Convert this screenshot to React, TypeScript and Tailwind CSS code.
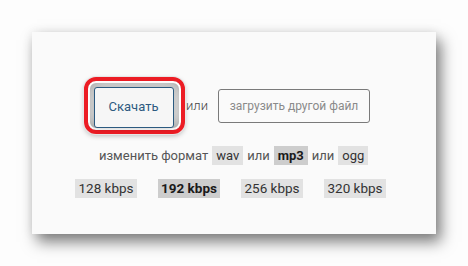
import React from "react";

const Tag = ({ children, active }: { children: React.ReactNode; active?: boolean }) => (
  <span
    className={
      "inline-flex h-[19px] items-center justify-center px-[4px] text-[13px] " +
      (active ? "bg-[#cdcdcd] font-bold text-[#1a1a1a]" : "bg-[#e2e2e2] text-[#333]")
    }
  >
    {children}
  </span>
);

const Kbps = ({ children, active }: { children: React.ReactNode; active?: boolean }) => (
  <span
    className={
      "inline-flex h-[19px] w-[62px] items-center justify-center text-[13.5px] " +
      (active ? "bg-[#cdcdcd] font-bold text-[#1a1a1a]" : "bg-[#e2e2e2] text-[#333]")
    }
  >
    {children}
  </span>
);

export default function App() {
  return (
    <div
      className="h-[266px] w-[468px] overflow-hidden bg-[#fdfdfd] pl-[32px] pt-[32px]"
      style={{ fontFamily: "Roboto, 'Liberation Sans', sans-serif" }}
    >
      <div className="flex h-[202px] w-[404px] flex-col bg-[#fafafa] shadow-[5px_8px_14px_rgba(0,0,0,0.5),0_0_10px_rgba(0,0,0,0.08)]">
        <div className="mt-[45px] flex items-center pl-[52px]">
          <div className="flex h-[57px] w-[101px] items-center justify-center rounded-[12px] border-[4px] border-[#ec1c24] pt-[3px] pr-[2px] shadow-[0_0_0_1px_#e6e6e6,0_2px_5px_rgba(0,0,0,0.25),inset_0_0_0_2px_#ffffff,inset_0_0_14px_rgba(0,0,0,0.5)]">
            <div className="flex h-[41px] w-[80px] items-center justify-center rounded-[3px] border border-[#2b5a80] bg-[#f6f6f6] text-[13px] text-[#2d5a80] shadow-[0_0_6px_rgba(0,0,0,0.25)]">
              Скачать
            </div>
          </div>
          <span className="ml-[1px] text-[13px] font-light text-[#444]">или</span>
          <div className="ml-[10px] flex h-[34px] w-[152px] items-center justify-center rounded-[3px] border border-[#7a7a7a] text-[12px] text-[#8a8a8a]">
            загрузить другой файл
          </div>
        </div>
        <div className="mt-[12px] flex items-center gap-[4px] pl-[67px] text-[13px] text-[#555]">
          <span>изменить формат</span>
          <Tag>wav</Tag>
          <span>или</span>
          <Tag active>mp3</Tag>
          <span>или</span>
          <Tag>ogg</Tag>
        </div>
        <div className="mt-[13px] flex items-center gap-[21px] pl-[43px]">
          <Kbps>128 kbps</Kbps>
          <Kbps active>192 kbps</Kbps>
          <Kbps>256 kbps</Kbps>
          <Kbps>320 kbps</Kbps>
        </div>
      </div>
    </div>
  );
}
